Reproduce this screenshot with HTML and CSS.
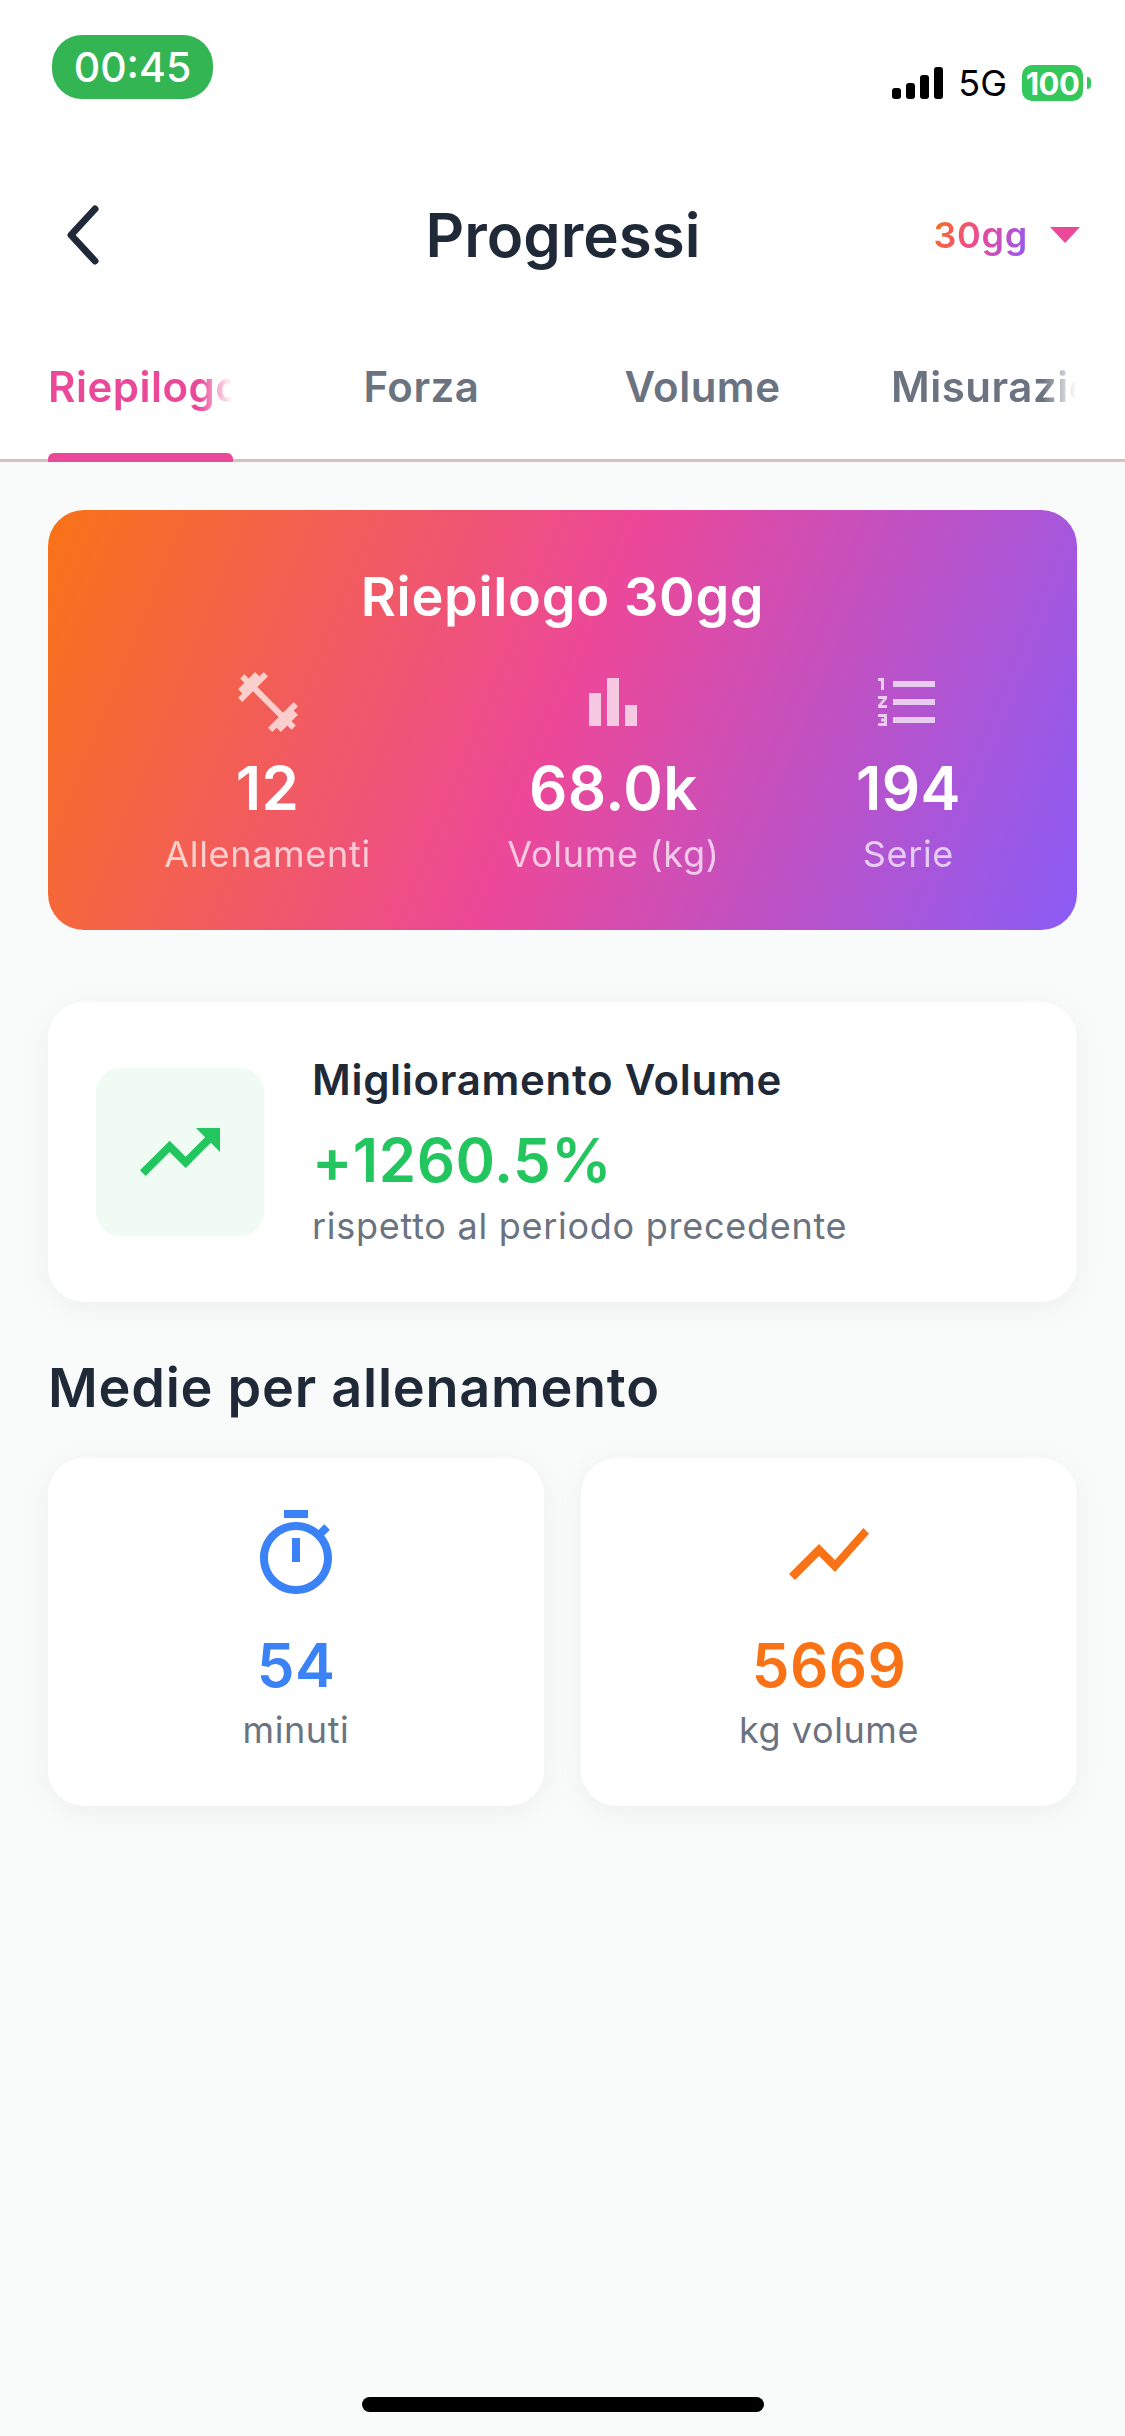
FILE: index.html
```html
<!DOCTYPE html>
<html lang="it">
<head>
  <meta charset="UTF-8">
  <title>Progressi</title>
  <meta name="viewport" content="width=device-width, initial-scale=1">
  <link rel="stylesheet" href="styles.css">
</head>
<body>
  <div class="screen">
    <div class="top">
      <div class="status">
        <span class="time">00:45</span>
        <div class="status-right">
          <svg class="signal" width="52" height="32" viewBox="0 0 52 32">
            <rect x="0" y="21" width="9" height="11" rx="3"/>
            <rect x="14" y="16" width="9" height="16" rx="3"/>
            <rect x="28" y="8" width="9" height="24" rx="3"/>
            <rect x="42" y="0" width="9" height="32" rx="3"/>
          </svg>
          <span class="net">5G</span>
          <div class="battery"><span class="battery-level">100</span><span class="battery-tip"></span></div>
        </div>
      </div>

      <div class="header">
        <svg class="back" width="44" height="68" viewBox="0 0 44 68">
          <polyline points="34,8 10,34 34,60" />
        </svg>
        <h1>Progressi</h1>
        <div class="period">
          <span class="period-text">30gg</span>
          <span class="caret"></span>
        </div>
      </div>

      <div class="tabs">
        <div class="tab active"><span class="fade">Riepilogo</span></div>
        <div class="tab"><span>Forza</span></div>
        <div class="tab"><span>Volume</span></div>
        <div class="tab"><span class="fade">Misurazioni</span></div>
      </div>
    </div>

    <div class="content">
      <div class="hero">
        <div class="hero-title">Riepilogo 30gg</div>
        <div class="hero-stats">
          <div class="hero-stat">
            <svg class="icon" viewBox="0 0 24 24"><path d="M20.57 14.86L22 13.43 20.57 12 17 15.57 8.43 7 12 3.43 10.57 2 9.14 3.43 7.71 2 5.57 4.14 4.14 2.71 2.71 4.14l1.43 1.43L2 7.71l1.43 1.43L2 10.57 3.43 12 7 8.43 15.57 17 12 20.57 13.43 22l1.43-1.43L16.29 22l2.14-2.14 1.43 1.43 1.43-1.43-1.43-1.43L22 16.29z"/></svg>
            <div class="hero-num">12</div>
            <div class="hero-label">Allenamenti</div>
          </div>
          <div class="hero-stat">
            <svg class="icon" viewBox="0 0 24 24"><path d="M4 9h4v11H4zm12 4h4v7h-4zm-6-9h4v16h-4z"/></svg>
            <div class="hero-num">68.0k</div>
            <div class="hero-label">Volume (kg)</div>
          </div>
          <div class="hero-stat">
            <svg class="icon" viewBox="0 0 24 24"><path d="M2 17h2v.5H3v1h1v.5H2v1h3v-4H2v1zm1-9h1V4H2v1h1v3zm-1 3h1.8L2 13.1v.9h3v-1H3.2L5 10.9V10H2v1zm5-6v2h14V5H7zm0 14h14v-2H7v2zm0-6h14v-2H7v2z"/></svg>
            <div class="hero-num">194</div>
            <div class="hero-label">Serie</div>
          </div>
        </div>
      </div>

      <div class="card improve">
        <div class="improve-icon">
          <svg class="icon-lg green" viewBox="0 0 24 24"><path d="M16 6l2.29 2.29-4.88 4.88-4-4L2 16.59 3.41 18l6-6 4 4 6.3-6.29L22 12V6z"/></svg>
        </div>
        <div class="improve-text">
          <div class="improve-title">Miglioramento Volume</div>
          <div class="improve-value">+1260.5%</div>
          <div class="improve-sub">rispetto al periodo precedente</div>
        </div>
      </div>

      <h2>Medie per allenamento</h2>
      <div class="avg-row">
        <div class="card avg">
          <svg class="icon-lg blue" viewBox="0 0 24 24"><path d="M15 1H9v2h6V1zm-4 13h2V8h-2v6zm8.03-6.61l1.42-1.42c-.43-.51-.9-.99-1.41-1.41l-1.42 1.42C16.07 4.74 14.12 4 12 4c-4.97 0-9 4.03-9 9s4.02 9 9 9 9-4.03 9-9c0-2.12-.74-4.07-1.97-5.61zM12 20c-3.87 0-7-3.13-7-7s3.13-7 7-7 7 3.13 7 7-3.13 7-7 7z"/></svg>
          <div class="avg-num blue">54</div>
          <div class="avg-label">minuti</div>
        </div>
        <div class="card avg">
          <svg class="icon-lg orange" viewBox="0 0 24 24"><path d="M3.5 18.49l6-6.01 4 4L22 6.92l-1.41-1.41-7.09 7.97-4-4L2 16.99z"/></svg>
          <div class="avg-num orange">5669</div>
          <div class="avg-label">kg volume</div>
        </div>
      </div>
    </div>

    <div class="home-bar"></div>
  </div>
</body>
</html>
```

FILE: styles.css
```css
* { box-sizing: border-box; }
body { margin: 0; background: #f9fafa; font-family: Inter, 'Noto Sans', sans-serif; color: #1f2937; }
.screen { width: 1125px; height: 2436px; display: flex; flex-direction: column; overflow: hidden; }

.top { background: #fff; }
.status { height: 160px; padding: 35px 34px 0 52px; display: flex; justify-content: space-between; align-items: flex-start; }
.time {
  width: 161px; height: 64px; border-radius: 30px; background: #34b553; color: #fff;
  font-size: 41px; font-weight: 500; display: flex; align-items: center; justify-content: center;
}
.status-right { display: flex; align-items: center; margin-top: 29px; }
.signal { fill: #000; margin-top: -1px; }
.net { font-size: 36px; margin-left: 14px; color: #000; line-height: 38px; }
.battery { display: flex; align-items: center; margin-left: 15px; }
.battery-level {
  width: 61px; height: 36px; border-radius: 10px; background: #34c759; color: #fff;
  font-size: 31px; font-weight: 700; display: flex; align-items: center; justify-content: center;
  letter-spacing: -0.5px;
}
.battery-tip { width: 4px; height: 12px; margin-left: 4px; background: #34c759; border-radius: 0 6px 6px 0; }

.header { height: 150px; padding: 0 45px 0 46px; display: grid; grid-template-columns: 1fr auto 1fr; align-items: center; }
.back { fill: none; stroke: #1f2937; stroke-width: 7; stroke-linecap: round; stroke-linejoin: round; margin-left: 15px; }
h1 { margin: 0; font-size: 60px; font-weight: 600; line-height: 72px; }
.period { display: flex; align-items: center; justify-content: flex-end; gap: 22px; }
.period-text {
  font-size: 36px; font-weight: 600; letter-spacing: 0.7px;
  background: linear-gradient(112deg, #f97316, #ec4899 50%, #8b5cf6);
  -webkit-background-clip: text; background-clip: text; color: transparent;
}
.caret { width: 0; height: 0; border-left: 15px solid transparent; border-right: 15px solid transparent; border-top: 16px solid #ec4899; }

.tabs { height: 152px; padding: 50px 0 0 48px; display: flex; gap: 96px; border-bottom: 3px solid #d9c2b9; }
.tab {
  width: 185px; height: 99px; line-height: 54px; position: relative; text-align: center; white-space: nowrap;
  font-size: 42px; font-weight: 600; color: #6b7280; letter-spacing: 0.5px;
}
.tab span { display: block; overflow: hidden; }
.tab .fade { -webkit-mask-image: linear-gradient(to right, #000 82%, transparent); mask-image: linear-gradient(to right, #000 82%, transparent); }
.tab.active { color: #ec4899; }
.tab.active::after {
  content: ""; position: absolute; left: 0; right: 0; bottom: -3px; height: 9px;
  background: #ec4899; border-radius: 6px 6px 0 0;
}

.content { padding: 48px 48px 0; flex: 1; }
.hero {
  height: 420px; border-radius: 36px; padding-top: 55px; color: #fff;
  background: linear-gradient(112deg, #f97316, #ec4899 50%, #8b5cf6);
}
.hero-title { font-size: 54px; font-weight: 600; text-align: center; line-height: 64px; letter-spacing: 0.7px; }
.hero-stats { display: flex; justify-content: space-around; padding: 0 48px; margin-top: 37px; }
.hero-stat { display: flex; flex-direction: column; align-items: center; }
.icon { width: 72px; height: 72px; fill: #fff; opacity: 0.7; }
.hero-num { font-size: 60px; font-weight: 600; line-height: 72px; margin-top: 14px; letter-spacing: 0.4px; }
.hero-label { font-size: 36px; line-height: 44px; opacity: 0.7; letter-spacing: 0.7px; margin-top: 8px; }

.card { background: #fff; border-radius: 36px; box-shadow: 0 6px 30px rgba(0, 0, 0, 0.05); }
.improve { height: 300px; margin-top: 72px; padding: 0 48px; display: flex; align-items: center; gap: 48px; }
.improve-icon { width: 168px; height: 168px; border-radius: 24px; background: #f0fbf3; display: flex; align-items: center; justify-content: center; }
.icon-lg { width: 96px; height: 96px; }
.green { fill: #22c55e; color: #22c55e; }
.blue { fill: #3b82f6; color: #3b82f6; }
.orange { fill: #f97316; color: #f97316; }
.improve-text { padding-bottom: 1px; }
.improve-title { font-size: 42px; font-weight: 600; line-height: 50px; letter-spacing: 0.7px; }
.improve-value { font-size: 60px; font-weight: 600; line-height: 72px; color: #22c55e; margin-top: 19px; letter-spacing: 0.5px; }
.improve-sub { font-size: 36px; line-height: 44px; color: #6b7280; margin-top: 8px; letter-spacing: 0.73px; }

h2 { margin: 54px 0 0; font-size: 54px; font-weight: 600; line-height: 64px; letter-spacing: 0.75px; }
.avg-row { display: flex; gap: 37px; margin-top: 38px; }
.avg { flex: 1; height: 348px; padding-top: 48px; display: flex; flex-direction: column; align-items: center; }
.avg-num { font-size: 60px; font-weight: 600; line-height: 72px; margin-top: 27px; letter-spacing: 0.4px; }
.avg-label { font-size: 36px; line-height: 44px; color: #6b7280; margin-top: 7px; letter-spacing: 0.6px; }

.home-bar { width: 402px; height: 15px; border-radius: 8px; background: #000; margin: 0 auto 24px; }
```
